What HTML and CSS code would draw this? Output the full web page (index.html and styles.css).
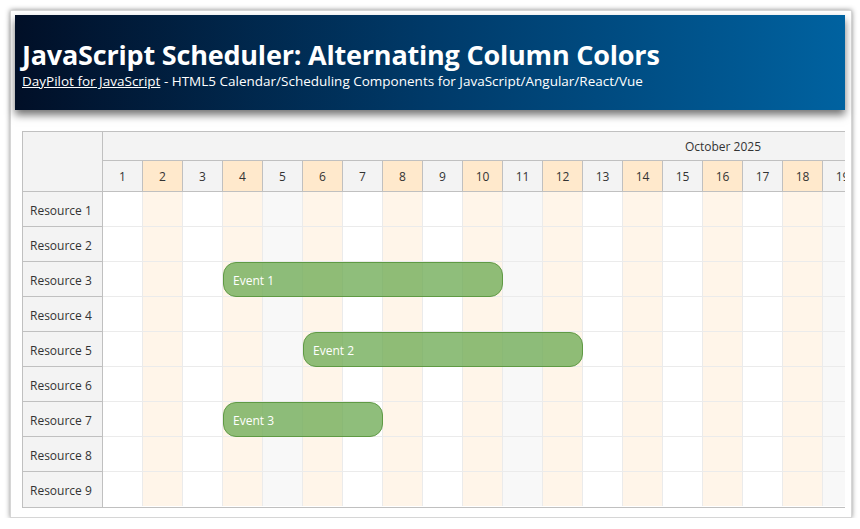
FILE: index.html
```
<!DOCTYPE html>
<html>
<head>
<meta charset="utf-8">
<link rel="stylesheet" href="styles.css">
</head>
<body>
<div class="card">
  <div class="header">
    <h1 class="title">JavaScript Scheduler: Alternating Column Colors</h1>
    <div class="subtitle"><a class="link" href="#">DayPilot for JavaScript</a> - HTML5 Calendar/Scheduling Components for JavaScript/Angular/React/Vue</div>
  </div>
  <div class="scheduler">
    <div class="head">
      <div class="corner"></div>
      <div class="timeline">
        <div class="month">October 2025</div>
        <div class="days">
          <div class="day">1</div><div class="day alt">2</div><div class="day">3</div><div class="day alt">4</div><div class="day">5</div><div class="day alt">6</div><div class="day">7</div><div class="day alt">8</div><div class="day">9</div><div class="day alt">10</div><div class="day">11</div><div class="day alt">12</div><div class="day">13</div><div class="day alt">14</div><div class="day">15</div><div class="day alt">16</div><div class="day">17</div><div class="day alt">18</div><div class="day">19</div>
        </div>
      </div>
    </div>
    <div class="body">
      <div class="rows">
        <div class="res">Resource 1</div>
        <div class="res">Resource 2</div>
        <div class="res">Resource 3</div>
        <div class="res">Resource 4</div>
        <div class="res">Resource 5</div>
        <div class="res">Resource 6</div>
        <div class="res">Resource 7</div>
        <div class="res">Resource 8</div>
        <div class="res">Resource 9</div>
      </div>
      <div class="grid">
        <div class="col"></div><div class="col alt"></div><div class="col"></div><div class="col alt"></div><div class="col we"></div><div class="col alt"></div><div class="col"></div><div class="col alt"></div><div class="col"></div><div class="col alt"></div><div class="col we"></div><div class="col alt"></div><div class="col"></div><div class="col alt"></div><div class="col"></div><div class="col alt"></div><div class="col"></div><div class="col alt"></div><div class="col we"></div>
        <div class="event" style="left:120px;top:70px;width:280px">Event 1</div>
        <div class="event" style="left:200px;top:140px;width:280px">Event 2</div>
        <div class="event" style="left:120px;top:210px;width:160px">Event 3</div>
      </div>
    </div>
  </div>
</div>
</body>
</html>
```
FILE: styles.css
```
html, body {
  margin: 0;
  padding: 0;
  background: #ffffff;
}
body {
  padding: 10px 8px 0 10px;
  font-family: "Open Sans", "Noto Sans", sans-serif;
}
.card {
  box-sizing: border-box;
  width: 842px;
  height: 508px;
  border: 1px solid #d6d6d6;
  box-shadow: 0 0 5px rgba(0, 0, 0, 0.45);
  padding: 4px 6px 0 4px;
  background: #fff;
}
.header {
  height: 95px;
  box-sizing: border-box;
  padding: 22px 7px 0 7px;
  background: linear-gradient(to right, #010f27 0%, #003a69 50%, #0062a0 100%);
  box-shadow: 0 5px 8px rgba(0, 0, 0, 0.55);
  color: #fff;
  position: relative;
}
.title {
  margin: 0;
  font-size: 27px;
  line-height: 35px;
  font-weight: 700;
  letter-spacing: -0.2px;
}
.subtitle {
  font-size: 13.5px;
  line-height: 18px;
  margin-top: 0px;
}
.link {
  color: #fff;
  text-decoration: underline;
}
.scheduler {
  margin: 21px 0 0 7px;
  width: 823px;
  box-sizing: border-box;
  border: 1px solid #c0c0c0;
  border-right: none;
  overflow: hidden;
  font-size: 12px;
  color: #333;
}
.head {
  display: flex;
}
.corner {
  flex: none;
  width: 80px;
  height: 60px;
  box-sizing: border-box;
  background: #f3f3f3;
  border-right: 1px solid #c0c0c0;
  border-bottom: 1px solid #c0c0c0;
}
.timeline {
  flex: 1;
  overflow: hidden;
}
.month {
  width: 1240px;
  height: 29px;
  box-sizing: border-box;
  background: #f3f3f3;
  border-bottom: 1px solid #c0c0c0;
  display: flex;
  align-items: center;
  justify-content: center;
}
.days {
  display: flex;
}
.day {
  flex: none;
  width: 40px;
  height: 31px;
  box-sizing: border-box;
  background: #f3f3f3;
  border-right: 1px solid #c0c0c0;
  border-bottom: 1px solid #c0c0c0;
  display: flex;
  align-items: center;
  justify-content: center;
}
.day.alt {
  background: #ffe9cc;
}
.body {
  display: flex;
}
.rows {
  flex: none;
  width: 80px;
}
.res {
  height: 35px;
  box-sizing: border-box;
  background: #f3f3f3;
  border-right: 1px solid #c0c0c0;
  border-bottom: 1px solid #c0c0c0;
  padding: 2px 0 0 7px;
  display: flex;
  align-items: center;
}
.res:last-child {
  border-bottom: none;
}
.grid {
  flex: 1;
  display: flex;
  position: relative;
  overflow: hidden;
  height: 314px;
}
.col {
  flex: none;
  width: 40px;
  height: 314px;
  box-sizing: border-box;
  border-right: 1px solid #ebebeb;
  background-color: #ffffff;
  background-image: linear-gradient(to bottom, transparent 34px, #ebebeb 34px);
  background-size: 100% 35px;
}
.col.alt {
  background-color: #fff5e9;
}
.col.we {
  background-color: #f8f8f8;
}
.event {
  position: absolute;
  height: 35px;
  box-sizing: border-box;
  background: rgba(106, 168, 79, 0.75);
  border: 1px solid #5f9a44;
  border-radius: 13px;
  color: #fff;
  font-size: 12px;
  padding: 1px 0 0 9px;
  display: flex;
  align-items: center;
}
```
